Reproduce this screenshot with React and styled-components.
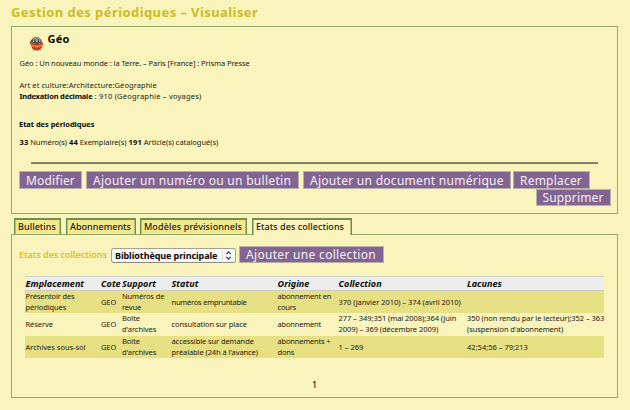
import React from "react";
import styled, { createGlobalStyle } from "styled-components";

const GlobalStyle = createGlobalStyle`
  *, *::before, *::after { box-sizing: border-box; }
  body {
    margin: 0;
    background: #f9f3bc;
    color: #1c1a10;
    font-family: "Noto Sans", "Open Sans", sans-serif;
    font-size: 7.5px;
    line-height: 11px;
  }
`;

const Page = styled.main`
  display: flex;
  flex-direction: column;
  width: 630px;
  height: 410px;
  padding: 3px 12px 0 11px;
  overflow: hidden;
`;

const PageTitle = styled.h1`
  margin: 0;
  height: 23px;
  font-size: 13px;
  line-height: 18px;
  font-weight: 700;
  letter-spacing: 0.42px;
  color: #cbbd1c;
`;

const Panel = styled.section`
  display: flex;
  flex-direction: column;
  height: ${(p) => p.$height}px;
  border: 1px solid #96a868;
  padding: ${(p) => p.$padding};
`;

const RecordHeading = styled.header`
  display: flex;
  align-items: flex-start;
  gap: 3.5px;
  height: 27px;
  padding-left: 10px;
`;

const BasketIcon = styled.svg`
  width: 15px;
  height: 15px;
  margin-top: 5px;
`;

const RecordName = styled.h2`
  margin: 0;
  font-size: 11px;
  line-height: 15px;
  letter-spacing: 0.25px;
  color: #0c0b08;
`;

const Line = styled.p`
  margin: 0;
  height: ${(p) => p.$height || 11}px;
  padding-left: ${(p) => p.$indent ?? 0.5}px;
  white-space: pre;
  letter-spacing: ${(p) => p.$track || 0}px;
`;

const Strong = styled.strong`
  font-weight: 700;
  color: #0c0b08;
  letter-spacing: ${(p) => p.$track ?? -0.05}px;
`;

const Rule = styled.hr`
  width: 567px;
  height: 2px;
  margin: 0 0 7px 12px;
  border: 0;
  border-top: 1px solid #8c8a6e;
  background: #7a7763;
`;

const ButtonBar = styled.div`
  display: flex;
  align-items: flex-start;
  height: 18px;
`;

const DeleteBar = styled(ButtonBar)`
  justify-content: flex-end;
  padding-right: 6.5px;
`;

const Button = styled.button`
  flex: none;
  width: ${(p) => p.$width}px;
  height: ${(p) => p.$height || 18}px;
  margin: 0 ${(p) => p.$gap || 0}px 0 0;
  padding: 0 0 0 6px;
  border: 1px solid #b9b0a8;
  background: #826492;
  color: #f6f0f4;
  font: 400 12px/15px "Noto Sans", sans-serif;
  letter-spacing: ${(p) => p.$track}px;
  text-align: left;
  white-space: nowrap;
`;

const Tabs = styled.nav`
  display: flex;
  align-items: flex-end;
  height: 21px;
  padding-left: 3px;
  margin-bottom: -1px;
`;

const Tab = styled.a`
  position: relative;
  width: ${(p) => p.$width}px;
  height: 17px;
  margin-right: ${(p) => p.$gap}px;
  padding-left: 3px;
  border: 1px solid #6f8f4b;
  border-width: 2px 1px 0;
  box-shadow: inset 1px 0 #b5bd7a, inset -1px 0 #b5bd7a,
    inset 0 -1px ${(p) => (p.$active ? "transparent" : "#96a868")};
  background: ${(p) => (p.$active ? "#f9f3bc" : "#f4e88f")};
  font-size: 9px;
  line-height: 13px;
  font-weight: 500;
  letter-spacing: ${(p) => p.$track}px;
  white-space: nowrap;
`;

const Filters = styled.div`
  display: flex;
  align-items: flex-start;
  height: 30px;
  padding-left: 7px;
`;

const FilterLabel = styled.h3`
  width: 92px;
  margin: 0;
  padding-top: 2px;
  font-size: 9px;
  line-height: 13px;
  font-weight: 600;
  letter-spacing: -0.05px;
  color: #d2c42c;
`;

const Picker = styled.button`
  display: flex;
  align-items: center;
  justify-content: space-between;
  width: 125px;
  height: 15px;
  margin: 2px 3px 0 0;
  padding: 0 3px;
  border: 1px solid #a5a293;
  border-bottom-color: #8e8b80;
  border-radius: 3px;
  background: linear-gradient(#ffffff, #f5f5f3 60%, #fdfdfd);
  color: #0c0b08;
  font: 700 9px/13px "Noto Sans", sans-serif;
  letter-spacing: -0.09px;
  white-space: nowrap;
`;

const PickerArrows = styled.svg`
  width: 10px;
  height: 11px;
`;

const Table = styled.div`
  width: 579px;
  margin-left: 13px;
`;

const Row = styled.div`
  display: grid;
  grid-template-columns: 75.5px 21px 49.5px 106px 61px 128.5px 137.5px;
  align-items: center;
  height: ${(p) => p.$height || 23}px;
  padding: 0 0 ${(p) => (p.$shaded ? 2 : 1)}px 0.5px;
  background: ${(p) => (p.$shaded ? "#e7df84" : "transparent")};
`;

const HeaderRow = styled(Row)`
  height: 15px;
  padding-bottom: 0;
  border-top: 1px solid #cfcfc8;
  border-bottom: 1px solid #cdcbbd;
  background: #ededed;
  font-size: 9px;
  line-height: 12px;
  font-weight: 700;
  font-style: italic;
  letter-spacing: 0.05px;
  color: #0c0b08;
`;

const Cell = styled.div`
  white-space: pre;
  letter-spacing: ${(p) => p.$track ?? -0.07}px;
`;

const HeaderCell = styled.div`
  white-space: nowrap;
`;

const Pager = styled.div`
  margin-top: 21px;
  text-align: center;
  font-size: 8px;
  font-weight: 500;
  color: #0c0b08;
`;

const columns = ["Emplacement", "Cote", "Support", "Statut", "Origine", "Collection", "Lacunes"];

const tabs = [
  { label: "Bulletins", width: 47, gap: 5, track: 0.06 },
  { label: "Abonnements", width: 70, gap: 4, track: 0.04 },
  { label: "Modèles prévisionnels", width: 107, gap: 5, track: 0.11 },
  { label: "Etats des collections", width: 100, gap: 0, track: 0.05, active: true },
];

const holdings = [
  {
    shaded: true,
    height: 22,
    cells: ["Présentoir des\npériodiques", "GEO", "Numéros de\nrevue", "numéros empruntable", "abonnement en\ncours", "370 (janvier 2010) – 374 (avril 2010)", ""],
    tracks: [-0.13, -0.1, -0.12, -0.23, -0.19, -0.04, 0],
  },
  {
    cells: ["Réserve", "GEO", "Boîte\nd'archives", "consultation sur place", "abonnement", "277 – 349;351 (mai 2008);364 (juin\n2009) – 369 (décembre 2009)", "350 (non rendu par le lecteur);352 – 363\n(suspension d'abonnement)"],
    tracks: [-0.07, -0.1, -0.07, -0.1, -0.19, -0.05, -0.07],
  },
  {
    shaded: true,
    height: 22,
    cells: ["Archives sous-sol", "GEO", "Boîte\nd'archives", "accessible sur demande\npréalable (24h à l'avance)", "abonnements +\ndons", "1 – 269", "42;54;56 – 79;213"],
    tracks: [-0.02, -0.1, -0.07, -0.09, -0.19, 0, 0],
  },
];

function Basket() {
  return (
    <BasketIcon viewBox="0 0 15 15" aria-hidden="true">
      <ellipse cx="8" cy="13.3" rx="4.8" ry="1.5" fill="#6d6954" opacity=".55" />
      <path d="M1 5.800 3 3.200 5 1.200l5 .2 2.200 2.300.8 2.900-5.400 1.500z" fill="#4a4642" />
      <path d="M4.500 6V3.800a1.400 1.400 0 0 1 2.800 0V6M8 6V3.600a1.400 1.400 0 0 1 2.800.2V6" fill="none" stroke="#c9c8cf" strokeWidth="1" />
      <path d="M.8 5.8C4 8.2 9.5 9 14 6.8c.2 4-2.4 6.8-6 6.8C4 13.600 1 10.200.8 5.800z" fill="#dc4a1c" />
      <path d="M2 8.500c3 2 7.500 2.400 11 .6" fill="none" stroke="#f2853f" strokeWidth="1.400" />
      <path d="M1 6c3.500 2.400 8.500 3 12.800.9" fill="none" stroke="#6a2417" strokeWidth=".8" />
      <path d="M3 11.500c2.800 2.600 7.200 2.300 9.500-.5" fill="none" stroke="#8d2a16" strokeWidth="1" />
    </BasketIcon>
  );
}

export default function App() {
  return (
    <>
      <GlobalStyle />
      <Page>
        <PageTitle>Gestion des périodiques – Visualiser</PageTitle>

        <Panel $height={188} $padding="4px 0 0 7px">
          <RecordHeading>
            <Basket />
            <RecordName>Géo</RecordName>
          </RecordHeading>
          <Line $height={22} $track={-0.07}>Géo : Un nouveau monde : la Terre. – Paris [France] : Prisma Presse</Line>
          <Line $track={0.07}>Art et culture:Architecture:Géographie</Line>
          <Line $height={28} $track={0.21}>
            <Strong $track={-0.19}>Indexation décimale</Strong> : 910 (Géographie – voyages)
          </Line>
          <Line $height={18} $indent={0}>
            <Strong>Etat des périodiques</Strong>
          </Line>
          <Line $height={25} $track={-0.03}>
            <Strong $track={0.1}>33</Strong> Numéro(s) <Strong $track={0.1}>44</Strong> Exemplaire(s) <Strong $track={0.2}>191</Strong> Article(s) catalogué(s)
          </Line>
          <Rule />
          <ButtonBar>
            <Button $width={63} $gap={4} $track={0.18}>Modifier</Button>
            <Button $width={213} $gap={4} $track={0.29}>Ajouter un numéro ou un bulletin</Button>
            <Button $width={208} $gap={2} $track={0.28}>Ajouter un document numérique</Button>
            <Button $width={77} $track={0.21}>Remplacer</Button>
          </ButtonBar>
          <DeleteBar>
            <Button $width={75} $height={17} $track={0.14}>Supprimer</Button>
          </DeleteBar>
        </Panel>

        <Tabs>
          {tabs.map((t) => (
            <Tab key={t.label} $width={t.width} $gap={t.gap} $track={t.track} $active={t.active}>
              {t.label}
            </Tab>
          ))}
        </Tabs>

        <Panel $height={164} $padding="11px 0 0 0">
          <Filters>
            <FilterLabel>Etats des collections</FilterLabel>
            <Picker>
              Bibliothèque principale
              <PickerArrows viewBox="0 0 10 11" aria-hidden="true">
                <path d="M.5 0v11" stroke="#dcdcda" />
                <path d="M4.300 4.200 6.500 1.800l2.200 2.400M4.300 6.800l2.200 2.400 2.200-2.400" fill="none" stroke="#3b3b3b" strokeWidth="1.100" />
              </PickerArrows>
            </Picker>
            <Button $width={145} $height={17} $track={0.31}>Ajouter une collection</Button>
          </Filters>

          <Table>
            <HeaderRow>
              {columns.map((c) => (
                <HeaderCell key={c}>{c}</HeaderCell>
              ))}
            </HeaderRow>
            {holdings.map((h) => (
              <Row key={h.cells[0]} $shaded={h.shaded} $height={h.height}>
                {h.cells.map((text, i) => (
                  <Cell key={i} $track={h.tracks[i]}>{text}</Cell>
                ))}
              </Row>
            ))}
          </Table>
          <Pager>1</Pager>
        </Panel>
      </Page>
    </>
  );
}
